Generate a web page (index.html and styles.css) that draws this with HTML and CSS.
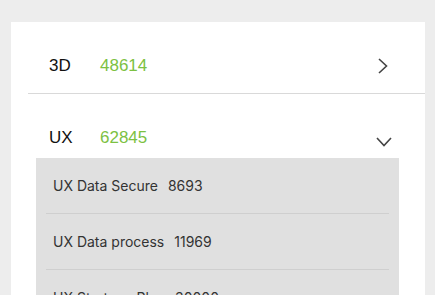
FILE: index.html
```html
<!DOCTYPE html>
<html lang="en">
<head>
    <meta charset="UTF-8">
    <meta name="viewport" content="width=device-width, initial-scale=1.0">
    <title>Category Stats</title>
    <link rel="stylesheet" href="styles.css">
</head>
<body>
    <div class="card">
        <div class="item first">
            <div class="item-head">
                <span class="item-name">3D</span>
                <span class="item-count">48614</span>
                <svg class="chevron" width="12" height="18" viewBox="0 0 12 18">
                    <path d="M2 2 L9.5 9 L2 16" fill="none" stroke="#444" stroke-width="1.6"/>
                </svg>
            </div>
        </div>

        <div class="item open">
            <div class="item-head">
                <span class="item-name">UX</span>
                <span class="item-count">62845</span>
                <svg class="chevron down" width="18" height="12" viewBox="0 0 18 12">
                    <path d="M2 2 L9 9.5 L16 2" fill="none" stroke="#444" stroke-width="1.6"/>
                </svg>
            </div>
            <div class="sub-list">
                <div class="sub-row">
                    <span class="sub-name">UX Data Secure</span>
                    <span class="sub-count">8693</span>
                </div>
                <div class="sub-row">
                    <span class="sub-name">UX Data process</span>
                    <span class="sub-count">11969</span>
                </div>
                <div class="sub-row">
                    <span class="sub-name">UX Strategy Plan</span>
                    <span class="sub-count">30000</span>
                </div>
            </div>
        </div>
    </div>
</body>
</html>
```

FILE: styles.css
```css
* {
    margin: 0;
    padding: 0;
    box-sizing: border-box;
}

body {
    font-family: Inter, "Liberation Sans", Arial, sans-serif;
    background: #ededed;
    padding: 22px 10px 0 11px;
    overflow: hidden;
}

.card {
    background: white;
    height: 300px;
}

.item {
    margin-left: 17px;
}

.item.first {
    padding: 22px 0 5px;
    border-bottom: 1px solid #d9d9d9;
}

.item-head {
    display: flex;
    align-items: center;
    height: 44px;
    padding: 0 36px 0 21px;
    font-family: "Liberation Sans", Arial, sans-serif;
}

.item.open .item-head {
    margin-top: 20px;
    padding-top: 4px;
}

.item-name {
    width: 51px;
    font-size: 17px;
    color: #111;
}

.item-count {
    flex: 1;
    font-size: 17px;
    color: #7cc142;
}

.chevron {
    display: block;
}

.chevron.down {
    margin-right: -4px;
    margin-top: 7px;
}

.sub-list {
    background: #e0e0e0;
    margin: 0 26px 0 8px;
    padding: 0 10px;
}

.sub-row {
    display: flex;
    align-items: center;
    height: 56px;
    padding-left: 7px;
    border-bottom: 1px solid #cfcfcf;
    font-size: 14px;
    color: #333;
}

.sub-name {
    margin-right: 10px;
}
```
